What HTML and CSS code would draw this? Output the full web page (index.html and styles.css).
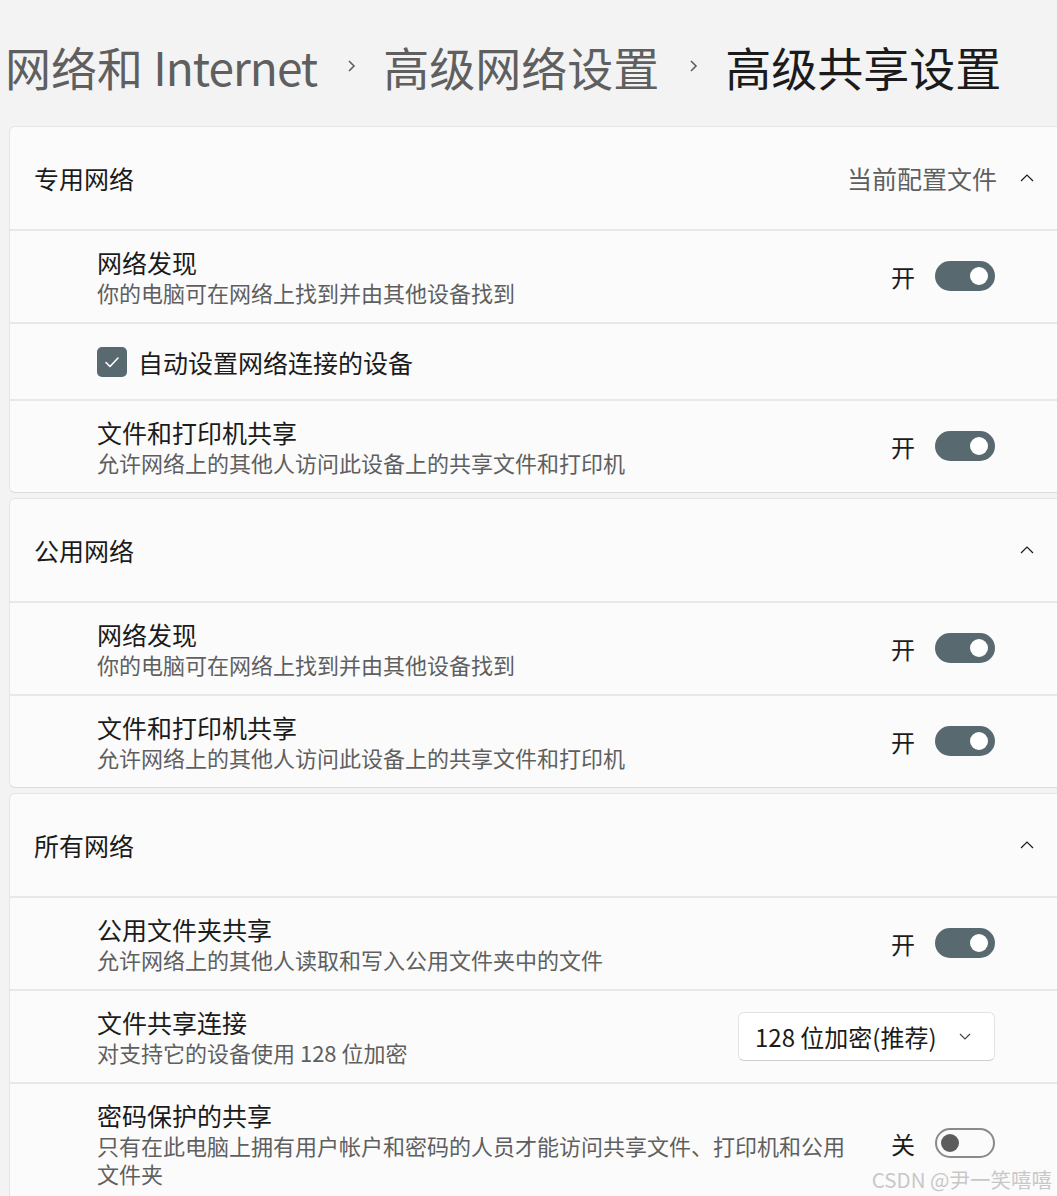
FILE: index.html
```html
<!DOCTYPE html>
<html lang="zh-CN">
<head>
    <meta charset="UTF-8">
    <meta name="viewport" content="width=device-width, initial-scale=1.0">
    <title>高级共享设置</title>
    <link rel="stylesheet" href="styles.css">
</head>
<body>

<div class="breadcrumb">
    <span class="crumb">网络和 <span class="latin">Internet</span></span>
    <svg class="crumb-sep" viewBox="0 0 12 18"><path d="M4 4 L9 9 L4 14" fill="none" stroke="#5f5f5f" stroke-width="1.6"/></svg>
    <span class="crumb">高级网络设置</span>
    <svg class="crumb-sep" viewBox="0 0 12 18"><path d="M4 4 L9 9 L4 14" fill="none" stroke="#5f5f5f" stroke-width="1.6"/></svg>
    <span class="crumb current">高级共享设置</span>
</div>

<!-- 专用网络 -->
<div class="card">
    <div class="card-header">
        <span class="card-title">专用网络</span>
        <span class="card-meta">当前配置文件</span>
        <svg class="chevron" viewBox="0 0 16 12"><path d="M2 9 L8 3 L14 9" fill="none" stroke="#1b1b1b" stroke-width="1.2"/></svg>
    </div>
    <div class="row">
        <div class="row-text">
            <div class="row-title">网络发现</div>
            <div class="row-desc">你的电脑可在网络上找到并由其他设备找到</div>
        </div>
        <div class="control">
            <span class="state">开</span>
            <span class="toggle on"></span>
        </div>
    </div>
    <div class="row row-check">
        <span class="checkbox">
            <svg viewBox="0 0 30 30"><path d="M9 15.5 L13 19.5 L21 11" fill="none" stroke="#fff" stroke-width="1.6" stroke-linecap="round" stroke-linejoin="round"/></svg>
        </span>
        <span class="check-label">自动设置网络连接的设备</span>
    </div>
    <div class="row">
        <div class="row-text">
            <div class="row-title">文件和打印机共享</div>
            <div class="row-desc">允许网络上的其他人访问此设备上的共享文件和打印机</div>
        </div>
        <div class="control">
            <span class="state">开</span>
            <span class="toggle on"></span>
        </div>
    </div>
</div>

<!-- 公用网络 -->
<div class="card">
    <div class="card-header">
        <span class="card-title">公用网络</span>
        <svg class="chevron" viewBox="0 0 16 12"><path d="M2 9 L8 3 L14 9" fill="none" stroke="#1b1b1b" stroke-width="1.2"/></svg>
    </div>
    <div class="row">
        <div class="row-text">
            <div class="row-title">网络发现</div>
            <div class="row-desc">你的电脑可在网络上找到并由其他设备找到</div>
        </div>
        <div class="control">
            <span class="state">开</span>
            <span class="toggle on"></span>
        </div>
    </div>
    <div class="row">
        <div class="row-text">
            <div class="row-title">文件和打印机共享</div>
            <div class="row-desc">允许网络上的其他人访问此设备上的共享文件和打印机</div>
        </div>
        <div class="control">
            <span class="state">开</span>
            <span class="toggle on"></span>
        </div>
    </div>
</div>

<!-- 所有网络 -->
<div class="card">
    <div class="card-header">
        <span class="card-title">所有网络</span>
        <svg class="chevron" viewBox="0 0 16 12"><path d="M2 9 L8 3 L14 9" fill="none" stroke="#1b1b1b" stroke-width="1.2"/></svg>
    </div>
    <div class="row">
        <div class="row-text">
            <div class="row-title">公用文件夹共享</div>
            <div class="row-desc">允许网络上的其他人读取和写入公用文件夹中的文件</div>
        </div>
        <div class="control">
            <span class="state">开</span>
            <span class="toggle on"></span>
        </div>
    </div>
    <div class="row">
        <div class="row-text">
            <div class="row-title">文件共享连接</div>
            <div class="row-desc">对支持它的设备使用 128 位加密</div>
        </div>
        <div class="dropdown">
            <span>128 位加密(推荐)</span>
            <svg viewBox="0 0 14 10"><path d="M2 3 L7 8 L12 3" fill="none" stroke="#444" stroke-width="1.2"/></svg>
        </div>
    </div>
    <div class="row">
        <div class="row-text narrow">
            <div class="row-title">密码保护的共享</div>
            <div class="row-desc">只有在此电脑上拥有用户帐户和密码的人员才能访问共享文件、打印机和公用文件夹</div>
        </div>
        <div class="control">
            <span class="state">关</span>
            <span class="toggle off"></span>
        </div>
    </div>
</div>

<div class="watermark">CSDN @尹一笑嘻嘻</div>

</body>
</html>
```

FILE: styles.css
```css
html, body {
    height: 100%;
    overflow: hidden;
}

body {
    margin: 0;
    padding: 0 0 0 9px;
    background-color: #f3f3f3;
    font-family: "Noto Sans CJK SC", "Noto Sans", sans-serif;
    color: #1b1b1b;
    position: relative;
}

.breadcrumb {
    display: flex;
    align-items: center;
    margin: 38px 0 0 -4px;
    height: 56px;
    font-size: 46px;
    line-height: 56px;
    color: #5f5f5f;
    white-space: nowrap;
}

.breadcrumb .latin {
    letter-spacing: -1px;
}

.crumb.current {
    color: #1b1b1b;
}

.crumb-sep {
    width: 12px;
    height: 18px;
    margin: 0 26px 0 28px;
}

.card {
    margin: 32px -20px 0 0;
    background-color: #fbfbfb;
    border: 1px solid #e5e5e5;
    border-bottom-color: #dcdcdc;
    border-radius: 6px;
}

.card + .card {
    margin-top: 5px;
}

.card-header {
    display: flex;
    align-items: center;
    height: 102px;
    padding: 0 41px 0 24px;
    font-size: 25px;
}

.card-title {
    flex: 1;
}

.card-meta {
    color: #5f5f5f;
    margin-right: 22px;
}

.chevron {
    width: 16px;
    height: 12px;
}

.row {
    display: flex;
    align-items: center;
    border-top: 2px solid #e8e8e8;
    padding: 15px 81px 16px 87px;
    min-height: 60px;
}

.row-text {
    flex: 1;
}

.row-text.narrow {
    max-width: 760px;
    margin-right: 34px;
}

.row-title {
    font-size: 25px;
    line-height: 32px;
}

.row-desc {
    font-size: 22px;
    line-height: 28px;
    color: #5f5f5f;
}

.control {
    display: flex;
    align-items: center;
    gap: 20px;
}

.state {
    font-size: 24px;
}

.toggle {
    position: relative;
    display: block;
    width: 60px;
    height: 30px;
    border-radius: 15px;
    box-sizing: border-box;
}

.toggle::after {
    content: "";
    position: absolute;
    top: 6px;
    width: 18px;
    height: 18px;
    border-radius: 50%;
}

.toggle.on {
    background-color: #596970;
}

.toggle.on::after {
    right: 7px;
    background-color: #fff;
}

.toggle.off {
    border: 2px solid #8a8a8a;
    background-color: #fbfbfb;
}

.toggle.off::after {
    top: 4px;
    left: 4px;
    background-color: #5c5c5c;
}

.row-check {
    min-height: 44px;
    padding-top: 16px;
    padding-bottom: 15px;
    gap: 11px;
}

.checkbox {
    display: block;
    width: 30px;
    height: 30px;
    border-radius: 5px;
    background-color: #596970;
}

.checkbox svg {
    display: block;
    width: 30px;
    height: 30px;
}

.check-label {
    font-size: 25px;
}

.dropdown {
    display: flex;
    align-items: center;
    justify-content: space-between;
    width: 257px;
    height: 49px;
    box-sizing: border-box;
    padding: 0 22px 0 16px;
    background-color: #fff;
    border: 1px solid #e3e3e3;
    border-bottom-color: #cfcfcf;
    border-radius: 6px;
    font-size: 24px;
}

.dropdown svg {
    width: 14px;
    height: 10px;
}

.watermark {
    position: absolute;
    right: 5px;
    top: 1164px;
    font-size: 20.5px;
    color: #c8c8c8;
}
```
